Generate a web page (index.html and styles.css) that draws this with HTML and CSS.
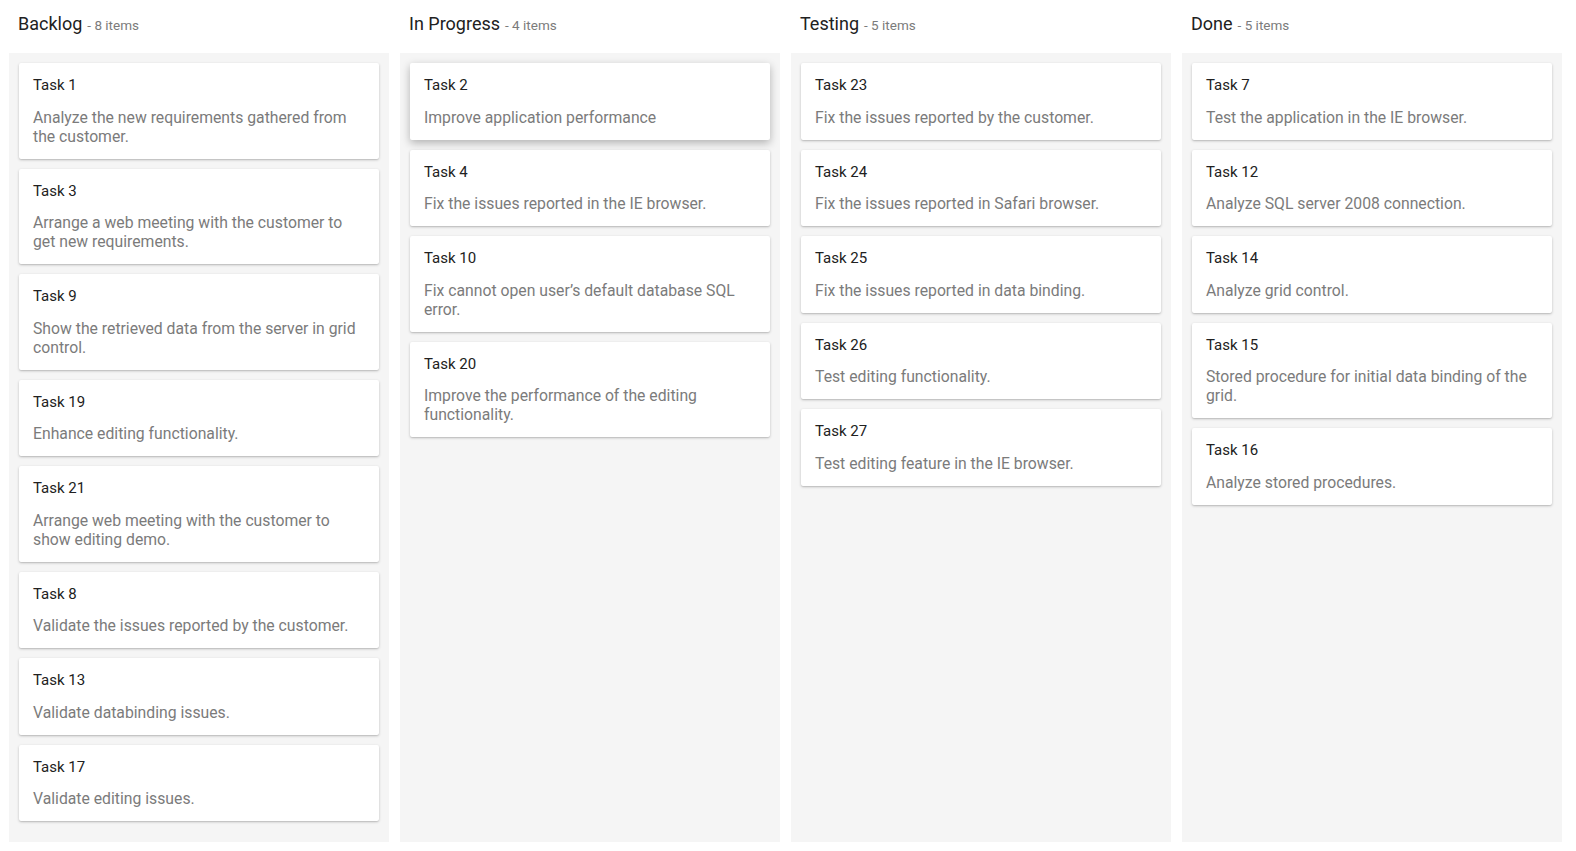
FILE: index.html
```html
<!DOCTYPE html>
<html lang="en">
<head>
    <meta charset="UTF-8">
    <meta name="viewport" content="width=device-width, initial-scale=1.0">
    <title>Kanban Board</title>
    <link rel="stylesheet" href="styles.css">
</head>
<body>
    <div class="kanban">
        <div class="headers">
            <div class="header"><span class="header-text">Backlog</span><span class="item-count">- 8 items</span></div>
            <div class="header"><span class="header-text">In Progress</span><span class="item-count">- 4 items</span></div>
            <div class="header"><span class="header-text">Testing</span><span class="item-count">- 5 items</span></div>
            <div class="header"><span class="header-text">Done</span><span class="item-count">- 5 items</span></div>
        </div>
        <div class="columns">
            <div class="column">
                <div class="card">
                    <div class="card-title">Task 1</div>
                    <div class="card-content">Analyze the new requirements gathered from the customer.</div>
                </div>
                <div class="card">
                    <div class="card-title">Task 3</div>
                    <div class="card-content">Arrange a web meeting with the customer to get new requirements.</div>
                </div>
                <div class="card">
                    <div class="card-title">Task 9</div>
                    <div class="card-content">Show the retrieved data from the server in grid control.</div>
                </div>
                <div class="card">
                    <div class="card-title">Task 19</div>
                    <div class="card-content">Enhance editing functionality.</div>
                </div>
                <div class="card">
                    <div class="card-title">Task 21</div>
                    <div class="card-content">Arrange web meeting with the customer to show editing demo.</div>
                </div>
                <div class="card">
                    <div class="card-title">Task 8</div>
                    <div class="card-content">Validate the issues reported by the customer.</div>
                </div>
                <div class="card">
                    <div class="card-title">Task 13</div>
                    <div class="card-content">Validate databinding issues.</div>
                </div>
                <div class="card">
                    <div class="card-title">Task 17</div>
                    <div class="card-content">Validate editing issues.</div>
                </div>
            </div>
            <div class="column">
                <div class="card selected">
                    <div class="card-title">Task 2</div>
                    <div class="card-content">Improve application performance</div>
                </div>
                <div class="card">
                    <div class="card-title">Task 4</div>
                    <div class="card-content">Fix the issues reported in the IE browser.</div>
                </div>
                <div class="card">
                    <div class="card-title">Task 10</div>
                    <div class="card-content">Fix cannot open user’s default database SQL error.</div>
                </div>
                <div class="card">
                    <div class="card-title">Task 20</div>
                    <div class="card-content">Improve the performance of the editing functionality.</div>
                </div>
            </div>
            <div class="column">
                <div class="card">
                    <div class="card-title">Task 23</div>
                    <div class="card-content">Fix the issues reported by the customer.</div>
                </div>
                <div class="card">
                    <div class="card-title">Task 24</div>
                    <div class="card-content">Fix the issues reported in Safari browser.</div>
                </div>
                <div class="card">
                    <div class="card-title">Task 25</div>
                    <div class="card-content">Fix the issues reported in data binding.</div>
                </div>
                <div class="card">
                    <div class="card-title">Task 26</div>
                    <div class="card-content">Test editing functionality.</div>
                </div>
                <div class="card">
                    <div class="card-title">Task 27</div>
                    <div class="card-content">Test editing feature in the IE browser.</div>
                </div>
            </div>
            <div class="column">
                <div class="card">
                    <div class="card-title">Task 7</div>
                    <div class="card-content">Test the application in the IE browser.</div>
                </div>
                <div class="card">
                    <div class="card-title">Task 12</div>
                    <div class="card-content">Analyze SQL server 2008 connection.</div>
                </div>
                <div class="card">
                    <div class="card-title">Task 14</div>
                    <div class="card-content">Analyze grid control.</div>
                </div>
                <div class="card">
                    <div class="card-title">Task 15</div>
                    <div class="card-content">Stored procedure for initial data binding of the grid.</div>
                </div>
                <div class="card">
                    <div class="card-title">Task 16</div>
                    <div class="card-content">Analyze stored procedures.</div>
                </div>
            </div>
        </div>
    </div>
</body>
</html>
```

FILE: styles.css
```css
:root {
    --column-bg: #f5f5f5;
    --title: #212121;
    --muted: #7b7b7b;
    --card-shadow: 0 1px 3px rgba(0, 0, 0, 0.2), 0 1px 1px rgba(0, 0, 0, 0.08);
}

* {
    margin: 0;
    padding: 0;
    box-sizing: border-box;
    font-family: Roboto, 'Liberation Sans', sans-serif;
}

body {
    background: #fff;
}

.kanban {
    padding: 0 14px 0 9px;
}

.headers,
.columns {
    display: grid;
    grid-template-columns: repeat(4, 1fr);
    gap: 11px;
}

.header {
    height: 53px;
    padding: 13px 9px 0;
    white-space: nowrap;
}

.header-text {
    font-size: 18px;
    color: var(--title);
}

.item-count {
    font-size: 13.5px;
    color: var(--muted);
    margin-left: 5px;
}

.column {
    height: 789px;
    background: var(--column-bg);
    padding: 10px;
    display: flex;
    flex-direction: column;
    gap: 10px;
}

.card {
    background: #fff;
    border-radius: 2px;
    box-shadow: var(--card-shadow);
    padding: 12px 14px 13px;
}

.card.selected {
    box-shadow: 0 3px 8px rgba(0, 0, 0, 0.28);
}

.card-title {
    font-size: 15px;
    line-height: 20px;
    color: var(--title);
    margin-bottom: 12.5px;
}

.card-content {
    font-size: 15.75px;
    line-height: 19px;
    color: var(--muted);
}
```
